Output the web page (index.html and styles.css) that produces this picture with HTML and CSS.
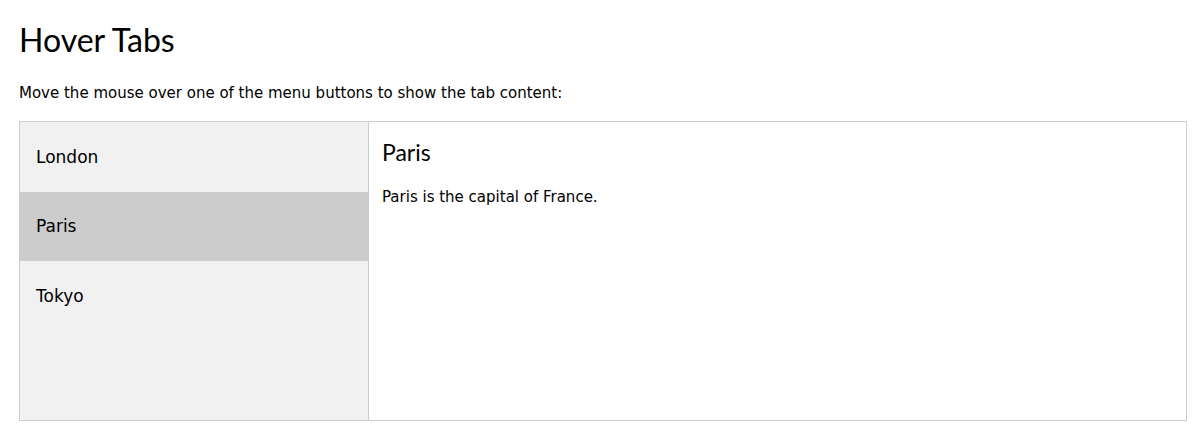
FILE: index.html
```
<!DOCTYPE html>
<html>
<head>
<meta charset="utf-8">
<link rel="stylesheet" href="styles.css">
</head>
<body>
<h2 class="title">Hover Tabs</h2>
<p class="intro">Move the mouse over one of the menu buttons to show the tab content:</p>
<div class="tabs">
  <div class="tab">
    <button class="tablink">London</button>
    <button class="tablink active">Paris</button>
    <button class="tablink">Tokyo</button>
  </div>
  <div class="tabcontent">
    <h3 class="content-title">Paris</h3>
    <p class="content-text">Paris is the capital of France.</p>
  </div>
</div>
</body>
</html>
```
FILE: styles.css
```
html, body {
  margin: 0;
  background: #fff;
}
body {
  padding: 0 14px 0 19px;
  font-family: "DejaVu Sans", Verdana, sans-serif;
  font-size: 15px;
  color: #000;
}
.title {
  margin: 0;
  padding-top: 20px;
  font-family: Lato, sans-serif;
  font-weight: 400;
  font-size: 32px;
  line-height: 40px;
}
.intro {
  margin: 0;
  padding-top: 24px;
  line-height: 18px;
}
.tabs {
  margin-top: 19px;
  display: flex;
  height: 300px;
  border: 1px solid #ccc;
  box-sizing: border-box;
}
.tab {
  width: 349px;
  flex: none;
  box-sizing: border-box;
  background: #f1f1f1;
  border-right: 1px solid #ccc;
  display: flex;
  flex-direction: column;
}
.tablink {
  display: block;
  height: 69.5px;
  padding: 0 16px;
  border: none;
  background: inherit;
  text-align: left;
  font-family: "DejaVu Sans", Verdana, sans-serif;
  font-size: 17px;
  color: #000;
  outline: none;
}
.tablink.active {
  background: #ccc;
}
.tabcontent {
  flex: 1;
  padding: 0 13px;
}
.content-title {
  margin: 15px 0 0;
  font-family: Lato, sans-serif;
  font-weight: 400;
  font-size: 23px;
  line-height: 30px;
}
.content-text {
  margin: 21px 0 0;
  line-height: 18px;
}
```
